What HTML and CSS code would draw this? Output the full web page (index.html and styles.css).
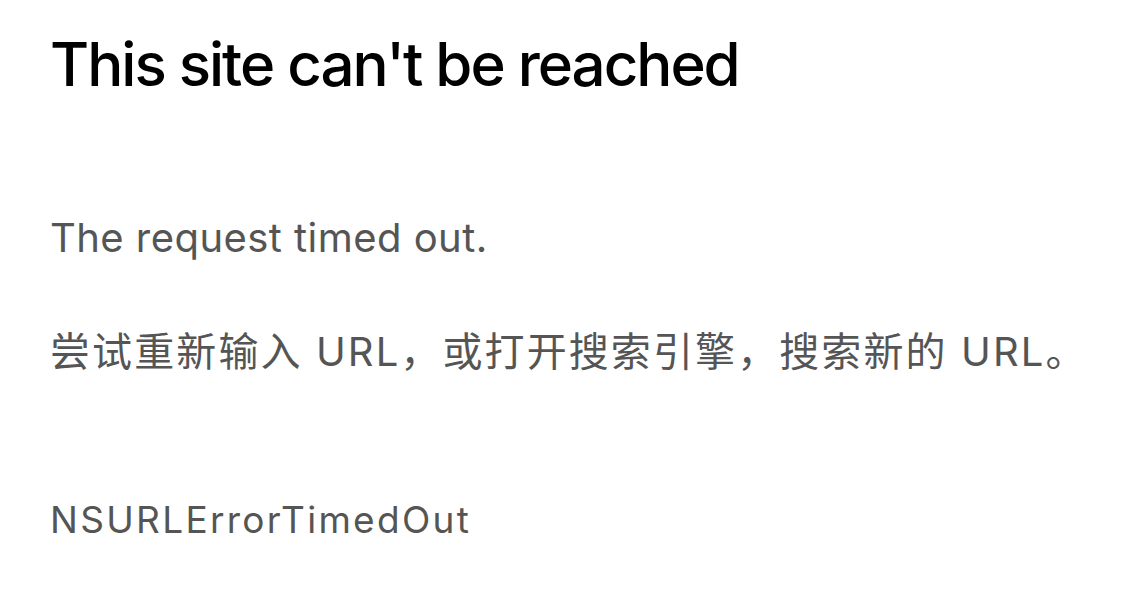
FILE: index.html
```html
<!DOCTYPE html>
<html lang="zh-CN">
<head>
<meta charset="utf-8">
<title>This site can't be reached</title>
<link rel="stylesheet" href="styles.css">
</head>
<body>
<main class="error-page">
  <h1 class="error-title">This site can't be reached</h1>
  <div class="error-body">
    <p class="error-message">The request timed out.</p>
    <p class="error-hint">尝试重新输入 URL，或打开搜索引擎，搜索新的 URL。</p>
  </div>
  <p class="error-code">NSURLErrorTimedOut</p>
</main>
</body>
</html>
```
FILE: styles.css
```css
html, body {
  margin: 0;
  padding: 0;
  background: #ffffff;
}

.error-page {
  display: flex;
  flex-direction: column;
  padding: 28px 50px 0 50px;
  font-family: Inter, "Noto Sans CJK SC", sans-serif;
}

.error-title {
  margin: 0;
  font-size: 60px;
  line-height: 72px;
  font-weight: 500;
  color: #000000;
  letter-spacing: -2px;
}

.error-body {
  display: flex;
  flex-direction: column;
  gap: 66px;
  margin-top: 113.5px;
}

.error-message,
.error-hint {
  margin: 0;
  font-size: 40px;
  line-height: 48px;
  color: #555555;
}

.error-message {
  letter-spacing: 0.45px;
}

.error-hint {
  letter-spacing: 2.1px;
  white-space: nowrap;
}

.error-code {
  margin: 122.5px 0 0 0;
  font-size: 37px;
  line-height: 44px;
  color: #555555;
  letter-spacing: 2.3px;
}
```
